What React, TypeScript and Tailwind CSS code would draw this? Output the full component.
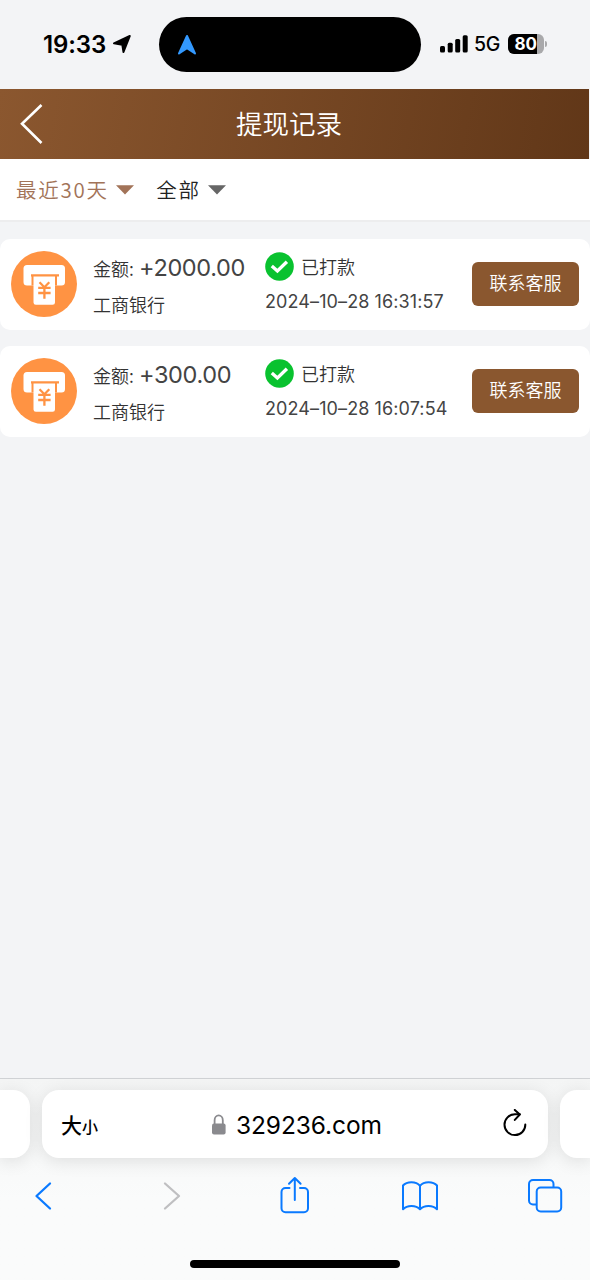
import React from 'react';
import { clsx } from 'clsx';

interface WithdrawRecord {
  id: number;
  amount: string;
  bank: string;
  status: string;
  time: string;
}

const records: WithdrawRecord[] = [
  { id: 1, amount: '+2000.00', bank: '工商银行', status: '已打款', time: '2024–10–28 16:31:57' },
  { id: 2, amount: '+300.00', bank: '工商银行', status: '已打款', time: '2024–10–28 16:07:54' },
];

function StatusBar() {
  return (
    <div className="flex h-[88.5px] items-start bg-[#f3f4f6] font-['Inter','Liberation_Sans',sans-serif] text-black">
      <div className="ml-[43px] mt-[31px] flex h-[26px] w-[116px] items-center">
        <span className="mt-[1px] w-[64px] text-[24px] font-semibold leading-none tracking-[-0.1px] whitespace-nowrap">19:33</span>
        <svg className="ml-[5px]" width="20" height="20" viewBox="0 0 20 20">
          <path d="M2 9.3 17.8 2 11.5 18 10.3 10.7Z" fill="#000" stroke="#000" strokeWidth="2" strokeLinejoin="round" />
        </svg>
      </div>

      {/* Dynamic island */}
      <div className="mt-[17px] flex h-[55px] w-[262px] items-center rounded-full bg-black pl-[18px]">
        <svg width="21" height="22" viewBox="0 0 21 22">
          <path d="M10 2 18 19.5 10 14.2 2 19.5Z" fill="#3399ff" stroke="#3399ff" strokeWidth="2" strokeLinejoin="round" />
        </svg>
      </div>

      <div className="mt-[31px] ml-[19px] flex h-[26px] items-center">
        <svg width="28" height="18" viewBox="0 0 28 18">
          <rect x="0" y="11" width="5" height="6.5" rx="1.5" />
          <rect x="7.7" y="7.7" width="5" height="9.8" rx="1.5" />
          <rect x="15.2" y="4" width="5" height="13.5" rx="1.5" />
          <rect x="22.7" y="0.3" width="5" height="17.2" rx="1.5" />
        </svg>
        <span className="mt-[2px] ml-[6px] w-[27px] text-[19.5px] font-medium leading-none tracking-[-0.4px]">5G</span>
        <div className="ml-[7px] flex h-5 w-[36px] overflow-hidden rounded-[6px] bg-[#a9a9ab]">
          <div className="flex w-[28.5px] items-center bg-black pl-[6.5px] text-[17px] font-bold leading-none text-white">80</div>
        </div>
        <div className="ml-[1px] h-[6px] w-[2px] rounded-r-full bg-[#a9a9ab]" />
      </div>
    </div>
  );
}

function PageHeader() {
  return (
    <header className="flex h-[70.5px] w-[589px] items-center bg-linear-[100deg,#8b572f,#613718] text-white">
      <svg className="ml-[19px]" width="26" height="42" viewBox="0 0 26 42" fill="none" stroke="#fff" strokeWidth="2.6">
        <path d="M22.5 2 3 20.8 22.5 40" />
      </svg>
      <h1 className="mr-[11px] ml-[-45px] flex-1 pb-[2px] text-center text-[26.5px] leading-none">提现记录</h1>
    </header>
  );
}

function Filter({ label, active }: { label: string; active?: boolean }) {
  return (
    <div className={clsx('flex items-center', active ? 'text-[#a27358]' : 'text-[#222]')}>
      <span className="text-[20.5px] leading-none tracking-[1.75px] whitespace-nowrap">{label}</span>
      <svg className="ml-[7.5px]" width="18" height="10" viewBox="0 0 18 10">
        <path d="M0 .3h18L9 9.5Z" fill={active ? '#a27358' : '#666'} />
      </svg>
    </div>
  );
}

function CashIcon() {
  return (
    <svg className="mb-[1px] shrink-0" width="66" height="66" viewBox="0 0 66 66">
      <circle cx="33" cy="33" r="33" fill="#ff9343" />
      <rect x="12.5" y="14" width="41.5" height="20.5" rx="3.5" fill="#fff" />
      <path d="M20 23.2h28v2.2h-2v9.1H20.5v-9.1H20Z" fill="#ff9343" />
      <path d="M22.5 25.4H44v26a2.4 2.4 0 0 1-2.4 2.4H24.9a2.4 2.4 0 0 1-2.4-2.4Z" fill="#fff" />
      <path d="M28.5 31.2l4.9 5 4.9-5M27.2 36.8h12.4M27.2 42h12.4M33.4 36.2v11.6" fill="none" stroke="#ff9343" strokeWidth="2.3" />
    </svg>
  );
}

function CheckIcon() {
  return (
    <svg width="29" height="29" viewBox="0 0 29 29">
      <circle cx="14.5" cy="14.5" r="14.3" fill="#09c22f" />
      <path d="M6.8 14l5.6 5 9.5-9.2" fill="none" stroke="#fff" strokeWidth="3.3" />
    </svg>
  );
}

function RecordCard({ record }: { record: WithdrawRecord }) {
  return (
    <div className="flex h-[91px] items-center rounded-[10px] bg-white px-[11px] text-[#333]">
      <CashIcon />

      <div className="mt-[3px] ml-4 flex w-[172px] flex-col whitespace-nowrap">
        <div className="flex h-9 items-center">
          <span className="w-[46px] text-[18px] leading-none">金额:</span>
          <span className="font-['Inter','Liberation_Sans',sans-serif] text-[23.5px] font-normal leading-none tracking-[-0.35px] text-[#444]">{record.amount}</span>
        </div>
        <div className="flex h-9 items-center text-[18px] leading-none">{record.bank}</div>
      </div>

      <div className="mb-[2px] flex w-[207px] flex-col whitespace-nowrap">
        <div className="flex h-9 items-center gap-[7px]">
          <CheckIcon />
          <span className="pb-[1px] text-[18px] leading-none">{record.status}</span>
        </div>
        <div className="flex h-[34px] items-center pt-[2px] font-['Inter','Liberation_Sans',sans-serif] text-[18px] font-normal leading-none tracking-[0.1px] text-[#444]">{record.time}</div>
      </div>

      <button className="mb-[1px] h-11 w-[107px] rounded-[6px] bg-[#8a572f] pb-[4px] text-[18px] leading-none text-white">联系客服</button>
    </div>
  );
}

function AddressBar() {
  return (
    <div className="flex h-[68px] justify-between">
      <div className="w-[30px] rounded-r-[17px] bg-white shadow-[0_3px_18px_rgba(0,0,0,0.11)]" />
      <div className="flex w-[506px] items-center rounded-[17px] bg-white shadow-[0_3px_18px_rgba(0,0,0,0.11)]">
        <div className="ml-[19px] flex w-[150px] items-baseline font-medium leading-none text-black">
          <span className="text-[21px]">大</span>
          <span className="text-[16px]">小</span>
        </div>
        <svg className="mt-[1px]" width="16" height="22" viewBox="0 0 16 22">
          <path d="M3.6 10V6.2a4.1 4.8 0 0 1 8.2 0V10" fill="none" stroke="#8a8a8e" strokeWidth="1.8" />
          <rect x="1" y="9.5" width="13.6" height="11" rx="2" fill="#8a8a8e" />
        </svg>
        <span className="mt-[2px] ml-[9px] w-[266px] font-['Inter','Liberation_Sans',sans-serif] text-[24.5px] font-normal leading-none tracking-[-0.1px] text-black">329236.com</span>
        <svg width="26" height="30" viewBox="0 0 26 30" fill="none" stroke="#000" strokeWidth="2" strokeLinecap="round" strokeLinejoin="round">
          <path d="M23.3 15.5A10.4 10.4 0 1 1 12.9 5.3H17.8" />
          <path d="M12.8.9l5 4.6-5 5.4" />
        </svg>
      </div>
      <div className="w-[30px] rounded-l-[17px] bg-white shadow-[0_3px_18px_rgba(0,0,0,0.11)]" />
    </div>
  );
}

function Toolbar() {
  return (
    <div className="mt-[18px] flex h-10 items-center justify-between pr-[27px] pl-[25px] text-[#0a7aff]">
      <svg width="36" height="40" viewBox="0 0 36 40" fill="none" stroke="currentColor" strokeWidth="2.3" strokeLinecap="round" strokeLinejoin="round">
        <path d="M25 7.5 11.5 20 25 32.5" />
      </svg>
      <svg width="36" height="40" viewBox="0 0 36 40" fill="none" stroke="#bfbfc1" strokeWidth="2.3" strokeLinecap="round" strokeLinejoin="round">
        <path d="M14 7.5 28 20 14 32.5" />
      </svg>
      <svg width="36" height="40" viewBox="0 0 36 40" fill="none" stroke="currentColor" strokeWidth="2" strokeLinecap="round" strokeLinejoin="round">
        <path d="M13.5 12H9.5a4 4 0 0 0-4 4v16.2a4 4 0 0 0 4 4h18.5a4 4 0 0 0 4-4V16a4 4 0 0 0-4-4H24" />
        <path d="M18.8 24V2.2M13 7.8 18.8 2l5.8 5.8" />
      </svg>
      <svg width="36" height="40" viewBox="0 0 36 40" fill="none" stroke="currentColor" strokeWidth="2" strokeLinejoin="round">
        <path d="M18 9.8C14 5 5 5 1 9.5V33.3C5 29 14 29 18 33.3 22 29 31 29 35 33.3V9.5C31 5 22 5 18 9.8V33" />
      </svg>
      <svg width="36" height="40" viewBox="0 0 36 40" fill="none" stroke="currentColor" strokeWidth="2">
        <path d="M9.5 28.5H6a4 4 0 0 1-4-4V8a4 4 0 0 1 4-4h16.5a4 4 0 0 1 4 4v3.5" />
        <rect x="9.7" y="11.5" width="24.5" height="24" rx="4" />
      </svg>
    </div>
  );
}

export default function App() {
  return (
    <div className="flex h-[1280px] w-[590px] flex-col overflow-hidden bg-[#f3f4f6] font-['Noto_Sans_CJK_SC',sans-serif] font-[350]">
      <StatusBar />
      <PageHeader />

      {/* Filters */}
      <div className="flex h-[63px] items-center gap-[22px] border-b-2 border-[#ededee] bg-white pl-4">
        <Filter label="最近30天" active />
        <Filter label="全部" />
      </div>

      <main className="flex flex-1 flex-col gap-4 pt-[16.5px]">
        {records.map((record) => (
          <RecordCard key={record.id} record={record} />
        ))}
      </main>

      {/* Browser chrome */}
      <footer className="flex h-[202px] flex-col border-t border-[#d0d2d5] bg-linear-to-b from-[#f4f5f5] to-[#fafbfb] to-60% pt-[11px]">
        <AddressBar />
        <Toolbar />
        <div className="mt-[44px] h-2 w-[210px] self-center rounded-full bg-black" />
      </footer>
    </div>
  );
}
